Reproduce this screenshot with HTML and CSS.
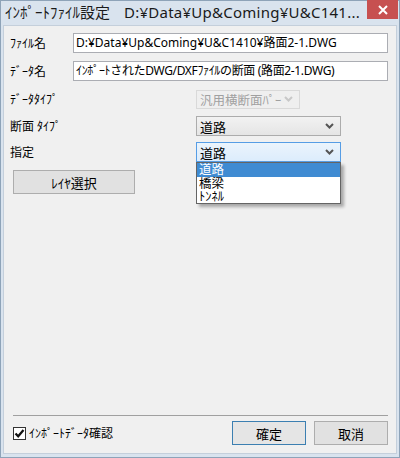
FILE: index.html
```html
<!DOCTYPE html>
<html lang="ja">
<head>
    <meta charset="UTF-8">
    <title>ｲﾝﾎﾟｰﾄﾌｧｲﾙ設定</title>
    <link rel="stylesheet" href="styles.css">
</head>
<body>
    <div class="window">
        <!-- タイトルバー -->
        <div class="titlebar">
            <span class="title">ｲﾝﾎﾟｰﾄﾌｧｲﾙ設定<span class="title-path">D:¥Data¥Up&amp;Coming¥U&amp;C141...</span></span>
            <div class="close-btn">
                <svg width="10" height="10" viewBox="0 0 10 10"><path d="M1 1 L9 9 M9 1 L1 9" stroke="#fff" stroke-width="2"/></svg>
            </div>
        </div>

        <div class="client">
            <div class="form">
                <div class="row">
                    <span class="label">ﾌｧｲﾙ名</span>
                    <div class="textbox">D:¥Data¥Up&amp;Coming¥U&amp;C1410¥路面2-1.DWG</div>
                </div>
                <div class="row">
                    <span class="label">ﾃﾞｰﾀ名</span>
                    <div class="textbox textbox-narrow">ｲﾝﾎﾟｰﾄされたDWG/DXFﾌｧｲﾙの断面 (路面2-1.DWG)</div>
                </div>
                <div class="row row-tight">
                    <span class="label">ﾃﾞｰﾀﾀｲﾌﾟ</span>
                    <div class="combo combo-disabled">
                        <span class="combo-text">汎用横断面ﾊﾟｰ</span>
                        <svg class="arrow" width="9" height="6" viewBox="0 0 9 6"><path d="M1 1 L4.5 4.5 L8 1" fill="none" stroke="#c8c8c8" stroke-width="2"/></svg>
                    </div>
                </div>
                <div class="row row-tighter">
                    <span class="label">断面 ﾀｲﾌﾟ</span>
                    <div class="combo">
                        <span class="combo-text">道路</span>
                        <svg class="arrow" width="9" height="6" viewBox="0 0 9 6"><path d="M1 1 L4.5 4.5 L8 1" fill="none" stroke="#555" stroke-width="2"/></svg>
                    </div>
                </div>
                <div class="row">
                    <span class="label">指定</span>
                    <div class="combo combo-open">
                        <span class="combo-text">道路</span>
                        <svg class="arrow" width="9" height="6" viewBox="0 0 9 6"><path d="M1 1 L4.5 4.5 L8 1" fill="none" stroke="#555" stroke-width="2"/></svg>
                        <ul class="dropdown">
                            <li class="selected">道路</li>
                            <li>橋梁</li>
                            <li>ﾄﾝﾈﾙ</li>
                        </ul>
                    </div>
                </div>
                <div class="layer-row">
                    <button class="btn btn-layer">ﾚｲﾔ選択</button>
                </div>
            </div>

            <!-- 下部ボタン -->
            <div class="footer">
                <div class="separator"></div>
                <div class="footer-row">
                    <label class="check">
                        <span class="checkbox">
                            <svg width="11" height="11" viewBox="0 0 11 11"><path d="M1.5 5.5 L4.2 8.3 L9.5 2" fill="none" stroke="#111" stroke-width="2.2"/></svg>
                        </span>
                        ｲﾝﾎﾟｰﾄﾃﾞｰﾀ確認
                    </label>
                    <div class="buttons">
                        <button class="btn btn-default">確定</button>
                        <button class="btn">取消</button>
                    </div>
                </div>
            </div>
        </div>
    </div>
</body>
</html>
```

FILE: styles.css
```css
body {
    margin: 0;
    padding: 0;
    font-family: "Noto Sans", "Noto Sans CJK JP", sans-serif;
    font-size: 12px;
    color: #000;
    background-color: #d9e3ee;
}

.window {
    width: 400px;
    height: 458px;
    box-sizing: border-box;
    background-color: #d9e3ee;
    border: 1px solid #8ea3b8;
    display: flex;
    flex-direction: column;
}

.titlebar {
    height: 24px;
    display: flex;
    align-items: flex-start;
    justify-content: space-between;
}

.title {
    font-size: 15px;
    line-height: 22px;
    padding-left: 4px;
    color: #1a1a1a;
    white-space: nowrap;
}

.title-path {
    margin-left: 14px;
    letter-spacing: 0.25px;
}

.close-btn {
    width: 31px;
    height: 19px;
    margin-top: -1px;
    margin-right: 1px;
    background-color: #c75050;
    display: flex;
    align-items: center;
    justify-content: center;
}

.client {
    flex: 1;
    margin: 0 2px 3px 2px;
    background-color: #f0f0f0;
    border: 1px solid #c4cfdb;
    display: flex;
    flex-direction: column;
    justify-content: space-between;
    padding: 7px 8px 8px 6px;
}

.form {
    display: flex;
    flex-direction: column;
}

.row {
    display: flex;
    align-items: center;
    height: 20px;
    margin-bottom: 8px;
}

.row-tight {
    margin-bottom: 7px;
}

.row-tighter {
    margin-bottom: 6px;
}

.label {
    width: 63px;
    flex-shrink: 0;
    white-space: nowrap;
}

.textbox {
    flex: 1;
    height: 20px;
    box-sizing: border-box;
    border: 1px solid #abadb3;
    background-color: #fff;
    padding: 0 2px;
    line-height: 18px;
    white-space: nowrap;
    overflow: hidden;
}

.textbox-narrow {
    letter-spacing: -0.35px;
}

.combo {
    margin-left: 123px;
    width: 145px;
    height: 20px;
    box-sizing: border-box;
    border: 1px solid #acacac;
    background: linear-gradient(#f2f2f2, #e5e5e5);
    display: flex;
    align-items: center;
    justify-content: space-between;
    padding: 0 6px 0 3px;
    position: relative;
}

.combo-text {
    font-size: 13px;
    white-space: nowrap;
}

.combo-disabled {
    width: 104px;
    height: 19px;
    border-color: #d9d9d9;
    background: #efefef;
    color: #a0a0a0;
}

.combo-disabled .combo-text {
    font-size: 12.5px;
}

.combo-open {
    border-color: #569de5;
    background: linear-gradient(#ebf4fc, #dcecfc);
}

.dropdown {
    position: absolute;
    top: 19px;
    left: -1px;
    width: 145px;
    box-sizing: border-box;
    margin: 0;
    padding: 0;
    list-style: none;
    background-color: #fff;
    border: 1px solid #646464;
    box-shadow: 3px 3px 3px rgba(0, 0, 0, 0.3);
    z-index: 2;
}

.dropdown li {
    height: 13px;
    line-height: 13px;
    font-size: 12.5px;
    padding-left: 2px;
}

.dropdown li.selected {
    background-color: #3f8bd2;
    color: #fff;
    height: 14px;
}

.layer-row {
    display: flex;
}

.btn {
    font-family: "Noto Sans", "Noto Sans CJK JP", sans-serif;
    font-size: 13px;
    width: 74px;
    height: 24px;
    border: 1px solid #adadad;
    background-color: #e1e1e1;
    color: #000;
    padding: 0;
}

.btn-layer {
    margin-left: 3px;
    width: 122px;
}

.btn-default {
    border-color: #3c7fb1;
    background-color: #e5e5e5;
}

.footer {
    display: flex;
    flex-direction: column;
}

.separator {
    height: 1px;
    margin: 0 0 5px 3px;
    background-color: #a0a0a0;
}

.footer-row {
    display: flex;
    align-items: center;
    justify-content: space-between;
}

.check {
    display: flex;
    align-items: center;
    gap: 3px;
    margin-left: 3px;
    font-size: 12px;
}

.checkbox {
    width: 13px;
    height: 13px;
    box-sizing: border-box;
    border: 1px solid #333;
    background-color: #fff;
    display: flex;
    align-items: center;
    justify-content: center;
}

.buttons {
    display: flex;
    gap: 8px;
}
```
